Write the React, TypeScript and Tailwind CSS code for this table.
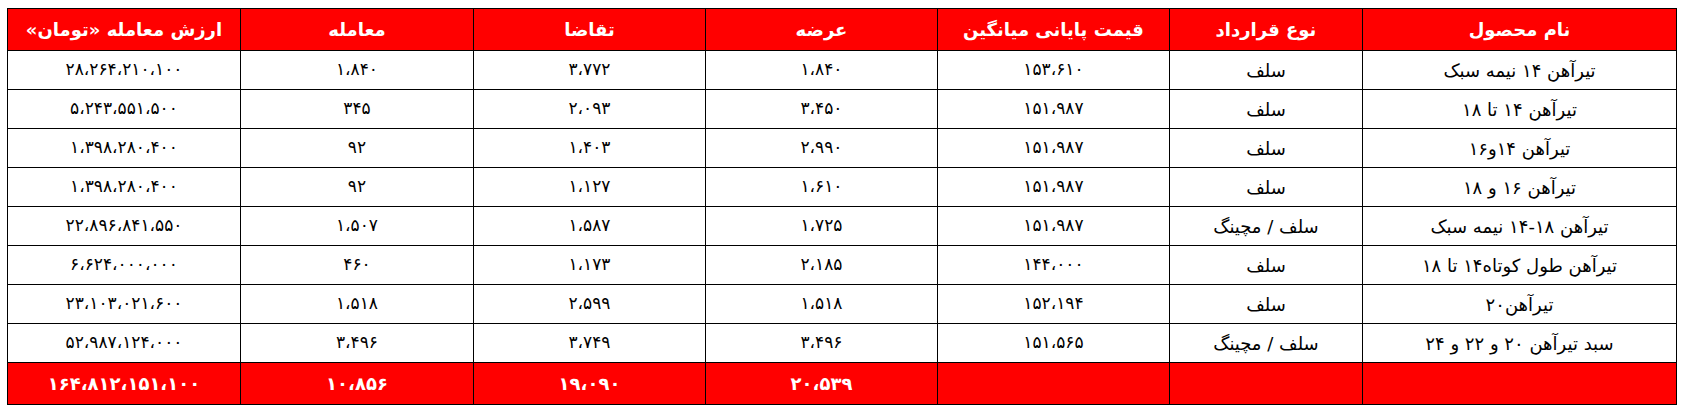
const headers = [
  "نام محصول",
  "نوع قرارداد",
  "قیمت پایانی میانگین",
  "عرضه",
  "تقاضا",
  "معامله",
  "ارزش معامله «تومان»",
];

const widths = ["w-[314px]", "w-[193px]", "w-[232px]", "w-[232px]", "w-[232px]", "w-[233px]", "w-[233px]"];

const rows = [
  ["تیرآهن ۱۴ نیمه سبک", "سلف", "۱۵۳،۶۱۰", "۱،۸۴۰", "۳،۷۷۲", "۱،۸۴۰", "۲۸،۲۶۴،۲۱۰،۱۰۰"],
  ["تیرآهن ۱۴ تا ۱۸", "سلف", "۱۵۱،۹۸۷", "۳،۴۵۰", "۲،۰۹۳", "۳۴۵", "۵،۲۴۳،۵۵۱،۵۰۰"],
  ["تیرآهن ۱۴و۱۶", "سلف", "۱۵۱،۹۸۷", "۲،۹۹۰", "۱،۴۰۳", "۹۲", "۱،۳۹۸،۲۸۰،۴۰۰"],
  ["تیرآهن ۱۶ و ۱۸", "سلف", "۱۵۱،۹۸۷", "۱،۶۱۰", "۱،۱۲۷", "۹۲", "۱،۳۹۸،۲۸۰،۴۰۰"],
  ["تیرآهن ۱۸-۱۴ نیمه سبک", "سلف / مچینگ", "۱۵۱،۹۸۷", "۱،۷۲۵", "۱،۵۸۷", "۱،۵۰۷", "۲۲،۸۹۶،۸۴۱،۵۵۰"],
  ["تیرآهن طول کوتاه۱۴ تا ۱۸", "سلف", "۱۴۴،۰۰۰", "۲،۱۸۵", "۱،۱۷۳", "۴۶۰", "۶،۶۲۴،۰۰۰،۰۰۰"],
  ["تیرآهن۲۰", "سلف", "۱۵۲،۱۹۴", "۱،۵۱۸", "۲،۵۹۹", "۱،۵۱۸", "۲۳،۱۰۳،۰۲۱،۶۰۰"],
  ["سبد تیرآهن ۲۰ و ۲۲ و ۲۴", "سلف / مچینگ", "۱۵۱،۵۶۵", "۳،۴۹۶", "۳،۷۴۹", "۳،۴۹۶", "۵۲،۹۸۷،۱۲۴،۰۰۰"],
];

const totals = ["", "", "", "۲۰،۵۳۹", "۱۹،۰۹۰", "۱۰،۸۵۶", "۱۶۴،۸۱۲،۱۵۱،۱۰۰"];

export default function App() {
  return (
    <div className="bg-white w-[1688px] h-[418px] pt-[8px] pl-[7px] font-['DejaVu_Sans',sans-serif]">
      <table dir="rtl" className="table-fixed border-collapse w-[1670px] text-center">
        <colgroup>
          {widths.map((w, i) => (
            <col key={i} className={w} />
          ))}
        </colgroup>
        <thead>
          <tr className="h-[42px] bg-[#ff0000]">
            {headers.map((h, i) => (
              <th key={i} className="border border-black text-white font-bold text-[18px] p-0">
                {h}
              </th>
            ))}
          </tr>
        </thead>
        <tbody>
          {rows.map((row, r) => (
            <tr key={r} className="h-[39px]">
              {row.map((cell, c) => (
                <td
                  key={c}
                  className={
                    c < 2
                      ? "border border-black text-black text-[18px] p-0"
                      : "border border-black text-black text-[17px] p-0"
                  }
                >
                  {cell}
                </td>
              ))}
            </tr>
          ))}
          <tr className="h-[42px] bg-[#ff0000]">
            {totals.map((t, i) => (
              <td key={i} className="border border-black text-white font-bold text-[18px] p-0">
                {t}
              </td>
            ))}
          </tr>
        </tbody>
      </table>
    </div>
  );
}
